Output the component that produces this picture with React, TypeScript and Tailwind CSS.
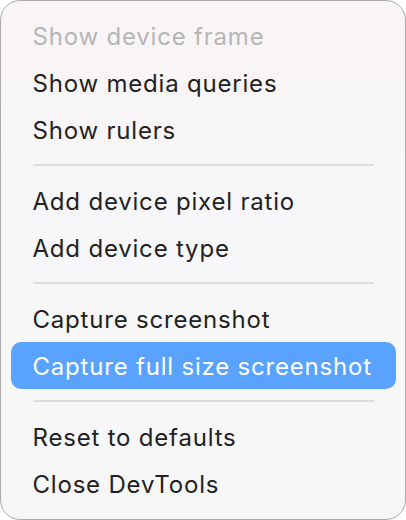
type Entry = { label: string; disabled?: boolean; active?: boolean } | 'sep';

const ITEMS: Entry[] = [
  { label: 'Show device frame', disabled: true },
  { label: 'Show media queries' },
  { label: 'Show rulers' },
  'sep',
  { label: 'Add device pixel ratio' },
  { label: 'Add device type' },
  'sep',
  { label: 'Capture screenshot' },
  { label: 'Capture full size screenshot', active: true },
  'sep',
  { label: 'Reset to defaults' },
  { label: 'Close DevTools' },
];

export default function App() {
  return (
    <div className="h-[520px] w-[406px] bg-white font-['Inter','Liberation_Sans',sans-serif]">
      <div className="flex h-full flex-col rounded-[20px] border-[1.5px] border-[#acacac] bg-[linear-gradient(180deg,#f9f4f6_0%,#f8f6f8_30%,#f7f7f8_60%,#f7f7f7_100%)] px-[9.5px] py-[11px]">
        {ITEMS.map((it, i) =>
          it === 'sep' ? (
            <div key={i} className="flex h-[24px] flex-none items-center px-[22px]">
              <div className="h-[2px] w-full bg-[#dddddd]" />
            </div>
          ) : (
            <div
              key={i}
              className={`flex h-[47px] flex-none items-center rounded-[10px] px-[22px] pt-[2px] text-[24px] tracking-[0.8px] ${
                it.active ? 'bg-[#59a2fd] text-white' : it.disabled ? 'text-[#b6b6b6]' : 'text-[#222222]'
              }`}
            >
              {it.label}
            </div>
          ),
        )}
      </div>
    </div>
  );
}
